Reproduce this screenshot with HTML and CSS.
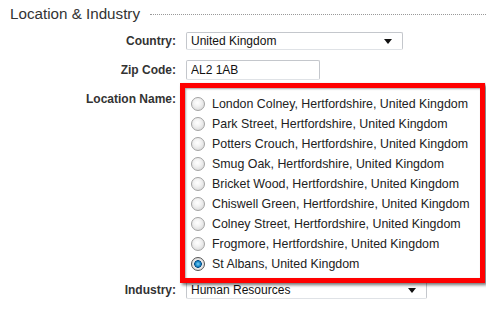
FILE: index.html
```html
<!DOCTYPE html>
<html lang="en">
<head>
  <meta charset="UTF-8" />
  <title>Location &amp; Industry</title>
  <link rel="stylesheet" href="styles.css">
</head>
<body>

  <div class="section-title">
    <h2>Location &amp; Industry</h2>
    <div class="dots"></div>
  </div>

  <div class="form">
    <label class="field-label">Country:</label>
    <div class="select country">United Kingdom<span class="arrow"></span></div>

    <label class="field-label">Zip Code:</label>
    <div><input class="text-input" type="text" value="AL2 1AB"></div>

    <label class="field-label label-top">Location Name:</label>
    <div class="highlight">
      <label class="radio-row"><input type="radio" name="loc"> London Colney, Hertfordshire, United Kingdom</label>
      <label class="radio-row"><input type="radio" name="loc"> Park Street, Hertfordshire, United Kingdom</label>
      <label class="radio-row"><input type="radio" name="loc"> Potters Crouch, Hertfordshire, United Kingdom</label>
      <label class="radio-row"><input type="radio" name="loc"> Smug Oak, Hertfordshire, United Kingdom</label>
      <label class="radio-row"><input type="radio" name="loc"> Bricket Wood, Hertfordshire, United Kingdom</label>
      <label class="radio-row"><input type="radio" name="loc"> Chiswell Green, Hertfordshire, United Kingdom</label>
      <label class="radio-row"><input type="radio" name="loc"> Colney Street, Hertfordshire, United Kingdom</label>
      <label class="radio-row"><input type="radio" name="loc"> Frogmore, Hertfordshire, United Kingdom</label>
      <label class="radio-row"><input type="radio" name="loc" checked> St Albans, United Kingdom</label>
    </div>

    <label class="field-label label-industry">Industry:</label>
    <div class="select industry">Human Resources<span class="arrow"></span></div>
  </div>

</body>
</html>
```

FILE: styles.css
```css
body {
  margin: 0;
  padding: 0;
  font-family: "Liberation Sans", Arial, sans-serif;
  font-size: 12px;
  color: #222;
  background: #fff;
}

.section-title {
  display: flex;
  align-items: center;
  gap: 10px;
  padding: 4px 0 0 10px;
  height: 19px;
}

.section-title h2 {
  margin: 0;
  font-size: 15.2px;
  font-weight: normal;
  color: #333;
  white-space: nowrap;
}

.dots {
  flex: 1;
  border-top: 1px dotted #999;
  margin-top: 1px;
}

.form {
  display: grid;
  grid-template-columns: 176px 1fr;
  column-gap: 10px;
  row-gap: 10px;
  margin-top: 9px;
  align-items: center;
}

.field-label {
  text-align: right;
  font-weight: bold;
  color: #333;
}

.label-top {
  align-self: start;
  margin-top: 2px;
}

.label-industry {
  align-self: start;
  margin-top: -10px;
}

.select {
  position: relative;
  box-sizing: border-box;
  height: 18px;
  line-height: 16px;
  padding-left: 4px;
  border: 1px solid #c4c7cc;
  border-bottom-color: #dfe2e6;
  border-radius: 2px;
  background: #fff;
  color: #111;
}

.country {
  width: 217px;
}

.industry {
  width: 241px;
  align-self: start;
  margin-top: -12px;
}

.arrow {
  position: absolute;
  right: 10px;
  top: 6px;
  border-left: 4px solid transparent;
  border-right: 4px solid transparent;
  border-top: 5px solid #111;
}

.text-input {
  box-sizing: border-box;
  width: 134px;
  height: 20px;
  margin: 0;
  padding: 0 4px;
  border: 1px solid #c4c7cc;
  border-bottom-color: #dfe2e6;
  border-radius: 2px;
  font-family: inherit;
  font-size: 12px;
  color: #111;
}

.highlight {
  position: relative;
  z-index: 2;
  box-sizing: border-box;
  width: 305px;
  margin-left: -6px;
  margin-top: -7px;
  padding: 6px 0 4px 6px;
  border: 5px solid #f00;
  background: #fff;
  box-shadow: 2px 2px 3px rgba(0,0,0,0.55), inset 1px 1px 2px rgba(0,0,0,0.35);
  display: flex;
  flex-direction: column;
}

.radio-row {
  display: flex;
  align-items: center;
  gap: 7px;
  height: 20px;
  font-size: 12.4px;
  color: #222;
  white-space: nowrap;
}

.radio-row input {
  appearance: none;
  -webkit-appearance: none;
  flex: none;
  width: 14px;
  height: 14px;
  margin: 0;
  border-radius: 50%;
  border: 1px solid #a3a3a3;
  box-sizing: border-box;
  background: radial-gradient(circle at 45% 40%, #fff 0%, #f3f3f3 35%, #d0d0d0 100%);
}

.radio-row input:checked {
  border-color: #555;
  background: radial-gradient(circle at 50% 50%, #7fd0f5 0%, #1a8ccc 28%, #0c4f86 42%, #e9e9e9 48%, #cfcfcf 100%);
}
```
